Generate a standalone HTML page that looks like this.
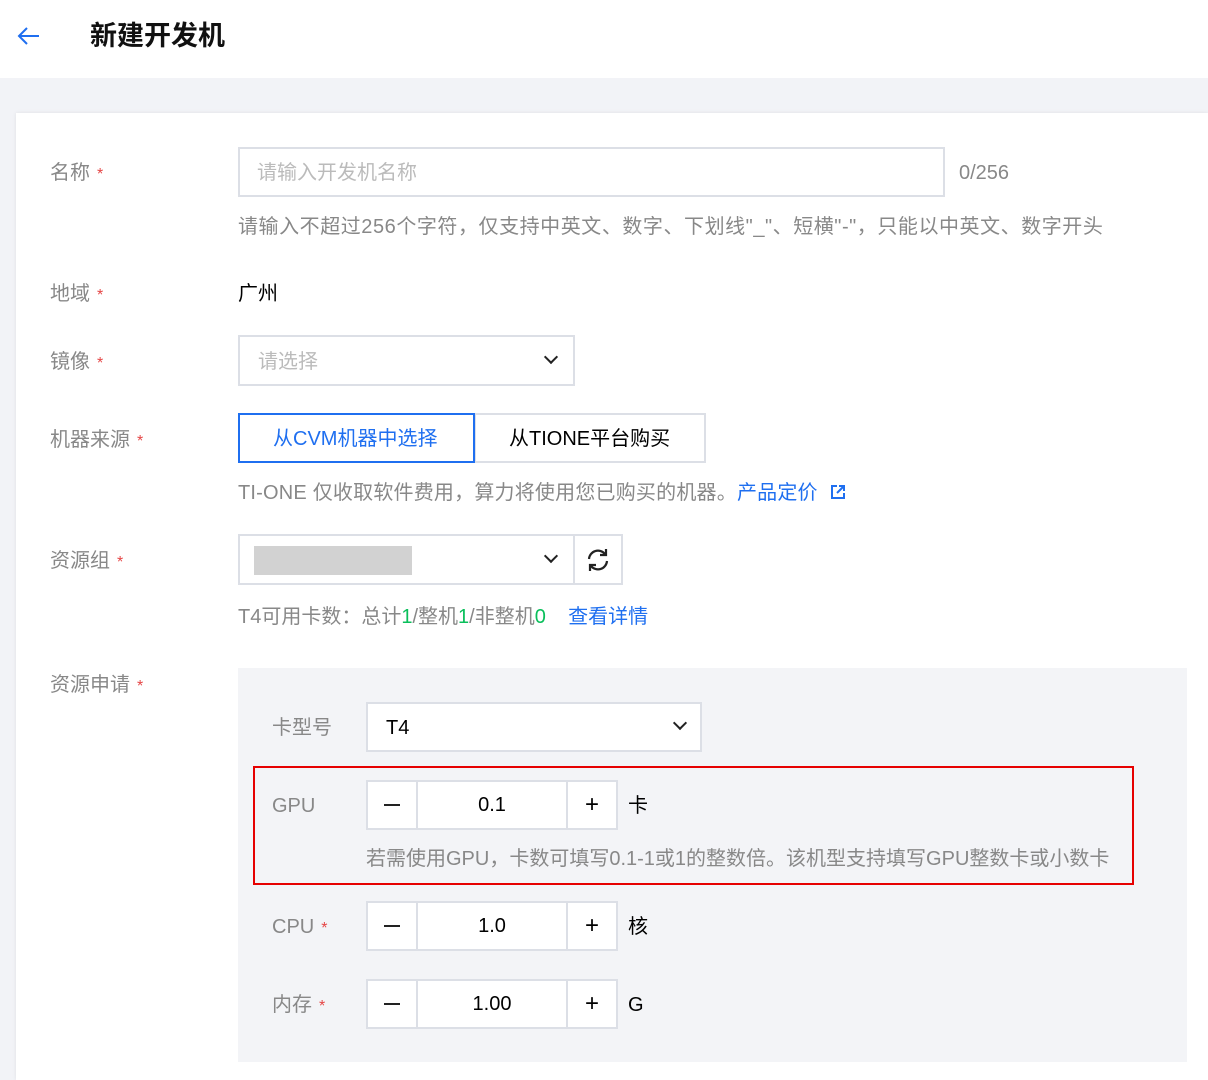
<!DOCTYPE html>
<html><head><meta charset="utf-8"><style>
*{margin:0;padding:0;box-sizing:border-box}
body{width:1208px;height:1080px;position:relative;overflow:hidden;background:#f2f3f7;font-family:"Liberation Sans","Noto Sans CJK SC",sans-serif;font-size:20px;color:#000}
.a{position:absolute;white-space:nowrap}
.lab{color:#888;line-height:26px}
.req{color:#e54545;font-size:16px;margin-left:7px}
.box{position:absolute;border:2px solid #dcdfe6;background:#fff}
.hint{color:#888;line-height:26px}
.chev{position:absolute;width:10px;height:10px;border-right:2px solid #222;border-bottom:2px solid #222;transform:rotate(45deg)}
.cell{position:absolute;border:2px solid #dcdfe6;background:#fff;display:flex;align-items:center;justify-content:center;font-size:20px}
.minus{width:16px;height:2px;background:#222}
</style></head><body>
<div class="a" style="left:0;top:0;width:1208px;height:78px;background:#fff"></div>
<svg class="a" style="left:16px;top:26px" width="24" height="20" viewBox="0 0 24 20"><path d="M23 10H3M11 2L3 10l8 8" fill="none" stroke="#1f6ff0" stroke-width="2"/></svg>
<div class="a" style="left:90px;top:19px;font-size:27px;font-weight:bold;color:#111;line-height:34px">新建开发机</div>
<div class="a" style="left:16px;top:113px;width:1192px;height:967px;background:#fff;box-shadow:0 0 4px rgba(0,0,0,.08)"></div>

<div class="a lab" style="left:50px;top:160px">名称<span class="req">*</span></div>
<div class="box" style="left:238px;top:147px;width:707px;height:50px"></div>
<div class="a" style="left:257px;top:160px;color:#bbb;line-height:26px">请输入开发机名称</div>
<div class="a hint" style="left:959px;top:160px">0/256</div>
<div class="a hint" style="left:238px;top:214px;letter-spacing:0.55px">请输入不超过256个字符，仅支持中英文、数字、下划线"_"、短横"-"，只能以中英文、数字开头</div>

<div class="a lab" style="left:50px;top:281px">地域<span class="req">*</span></div>
<div class="a" style="left:238px;top:281px;line-height:26px">广州</div>

<div class="a lab" style="left:50px;top:349px">镜像<span class="req">*</span></div>
<div class="box" style="left:238px;top:335px;width:337px;height:51px"></div>
<div class="a" style="left:258px;top:349px;color:#bbb;line-height:26px">请选择</div>
<div class="chev" style="left:546px;top:352px"></div>

<div class="a lab" style="left:50px;top:427px">机器来源<span class="req">*</span></div>
<div class="box" style="left:474px;top:413px;width:232px;height:50px"></div>
<div class="box" style="left:238px;top:413px;width:237px;height:50px;border-color:#1f6ff0"></div>
<div class="a" style="left:273px;top:426px;color:#1f6ff0;line-height:26px">从CVM机器中选择</div>
<div class="a" style="left:509px;top:426px;line-height:26px">从TIONE平台购买</div>
<div class="a hint" style="left:238px;top:480px;letter-spacing:0.2px">TI-ONE 仅收取软件费用，算力将使用您已购买的机器。<span style="color:#1f6ff0">产品定价</span></div>
<svg class="a" style="left:830px;top:484px" width="16" height="16" viewBox="0 0 16 16"><path d="M7 2H2v12h12V9M9 2h5v5M14 2L7 9" fill="none" stroke="#1f6ff0" stroke-width="2"/></svg>

<div class="a lab" style="left:50px;top:548px">资源组<span class="req">*</span></div>
<div class="box" style="left:238px;top:534px;width:337px;height:51px"></div>
<div class="box" style="left:573px;top:534px;width:50px;height:51px"></div>
<div class="a" style="left:254px;top:546px;width:158px;height:29px;background:#d2d2d2"></div>
<div class="chev" style="left:546px;top:551px"></div>
<svg class="a" style="left:585px;top:547px" width="26" height="26" viewBox="0 0 26 26"><path d="M4 12a9 9 0 0 1 16-5M22 14a9 9 0 0 1-16 5" fill="none" stroke="#222" stroke-width="2.2"/><path d="M21 2v6h-6M5 24v-6h6" fill="none" stroke="#222" stroke-width="2.2"/></svg>
<div class="a hint" style="left:238px;top:604px">T4可用卡数：总计<span style="color:#0abf5b">1</span>/整机<span style="color:#0abf5b">1</span>/非整机<span style="color:#0abf5b">0</span>&nbsp;&nbsp;&nbsp;&nbsp;<span style="color:#1f6ff0">查看详情</span></div>

<div class="a lab" style="left:50px;top:672px">资源申请<span class="req">*</span></div>
<div class="a" style="left:238px;top:668px;width:949px;height:394px;background:#f3f4f7"></div>
<div class="a lab" style="left:272px;top:715px">卡型号</div>
<div class="box" style="left:366px;top:702px;width:336px;height:50px"></div>
<div class="a" style="left:386px;top:715px;line-height:26px">T4</div>
<div class="chev" style="left:675px;top:718px"></div>

<div class="a" style="left:253px;top:766px;width:881px;height:119px;border:2px solid #e60000"></div>
<div class="a lab" style="left:272px;top:793px">GPU</div>
<div class="cell" style="left:366px;top:780px;width:52px;height:50px"><div class="minus"></div></div>
<div class="cell" style="left:416px;top:780px;width:152px;height:50px">0.1</div>
<div class="cell" style="left:566px;top:780px;width:52px;height:50px;font-size:24px">+</div>
<div class="a" style="left:628px;top:793px;line-height:26px">卡</div>
<div class="a hint" style="left:366px;top:846px">若需使用GPU，卡数可填写0.1-1或1的整数倍。该机型支持填写GPU整数卡或小数卡</div>

<div class="a lab" style="left:272px;top:914px">CPU<span class="req">*</span></div>
<div class="cell" style="left:366px;top:901px;width:52px;height:50px"><div class="minus"></div></div>
<div class="cell" style="left:416px;top:901px;width:152px;height:50px">1.0</div>
<div class="cell" style="left:566px;top:901px;width:52px;height:50px;font-size:24px">+</div>
<div class="a" style="left:628px;top:914px;line-height:26px">核</div>

<div class="a lab" style="left:272px;top:992px">内存<span class="req">*</span></div>
<div class="cell" style="left:366px;top:979px;width:52px;height:50px"><div class="minus"></div></div>
<div class="cell" style="left:416px;top:979px;width:152px;height:50px">1.00</div>
<div class="cell" style="left:566px;top:979px;width:52px;height:50px;font-size:24px">+</div>
<div class="a" style="left:628px;top:992px;line-height:26px">G</div>
</body></html>
